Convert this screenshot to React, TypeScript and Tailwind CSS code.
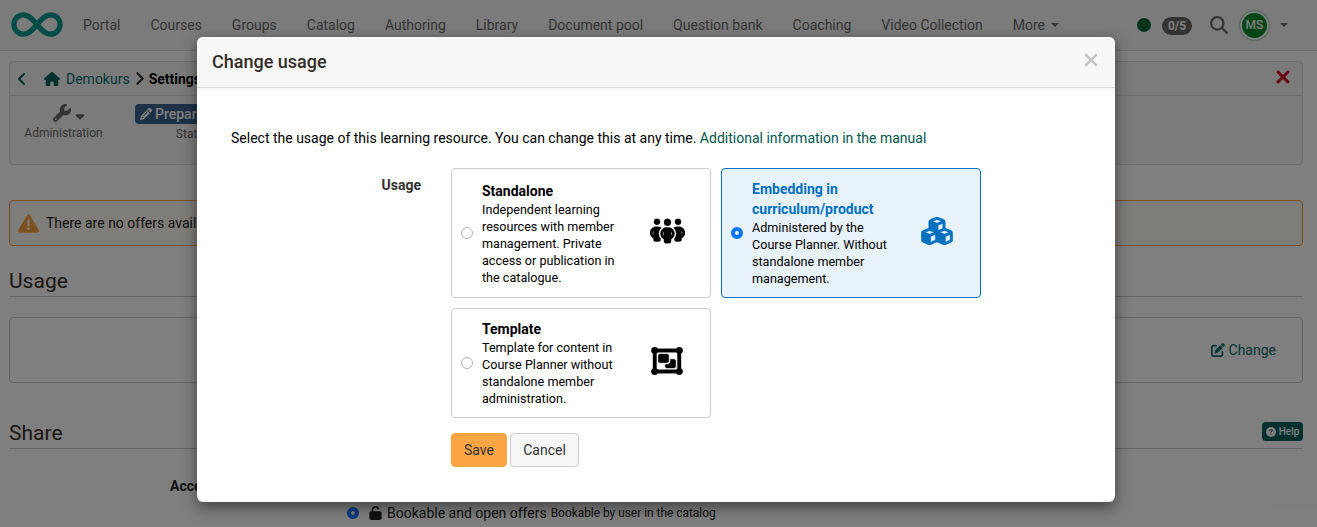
import type { ReactNode } from "react";
import {
  FaAngleLeft,
  FaAngleRight,
  FaCaretDown,
  FaCircleQuestion,
  FaCubes,
  FaHouse,
  FaMagnifyingGlass,
  FaObjectGroup,
  FaPencil,
  FaPenToSquare,
  FaPeopleGroup,
  FaTriangleExclamation,
  FaUnlock,
  FaWrench,
  FaXmark,
} from "react-icons/fa6";

const NAV = [
  "Portal",
  "Courses",
  "Groups",
  "Catalog",
  "Authoring",
  "Library",
  "Document pool",
  "Question bank",
  "Coaching",
  "Video Collection",
];

function Logo() {
  return (
    <svg className="h-[26px] w-[52px]" viewBox="0 0 52 26" fill="none" stroke="#009b91" strokeWidth="5.2">
      <path d="M26 12.500C21.5 7.500 18.500 2.800 12.500 2.800A9.600 9.700 0 0 0 12.500 22.200C18.500 22.200 21.500 17.500 26 12.500C30.500 7.500 33.500 2.800 39.500 2.800A9.600 9.700 0 0 1 39.500 22.200C33.500 22.200 30.500 17.500 26 12.500Z" />
    </svg>
  );
}

function Caret() {
  return <span className="border-x-4 border-t-4 border-x-transparent border-t-current" />;
}

function Radio({ checked }: { checked?: boolean }) {
  return checked ? (
    <span className="size-3 shrink-0 rounded-full border-4 border-[#0075ff] bg-white" />
  ) : (
    <span className="size-3 shrink-0 rounded-full border border-[#b2b2b2] bg-white" />
  );
}

function Header() {
  return (
    <header className="flex h-[51px] items-center border-b border-[#dddddd] bg-[#f7f7f7] pl-[11px] text-[#6b6b6b]">
      <div className="flex w-[72px]">
        <Logo />
      </div>
      <nav className="flex flex-1 gap-[30px]">
        {NAV.map((n) => (
          <span key={n}>{n}</span>
        ))}
        <span className="flex items-center gap-1.5">
          More <Caret />
        </span>
      </nav>
      <div className="flex items-center pr-[29px]">
        <span className="mr-[11px] size-3.5 rounded-full bg-[#006b3a]" />
        <span className="mr-[18px] mt-0.5 flex h-[18px] w-[30px] items-center justify-center rounded-full bg-[#666666] text-xs font-bold text-white">
          0/5
        </span>
        <FaMagnifyingGlass className="mr-3 size-[18px]" />
        <span className="mr-[11px] flex size-[29px] items-center justify-center rounded-full border-2 border-white bg-[#008a2a] text-xs font-medium text-white shadow-[0_0_2px_#008a2a]">
          MS
        </span>
        <Caret />
      </div>
    </header>
  );
}

function Toolbar() {
  return (
    <section className="mt-2.5 h-[104px] rounded border border-[#dddddd] bg-[#f7f7f7]">
      <div className="flex h-[34px] items-center border-b border-[#dddddd] pr-[9px] pl-1 text-[#006f69]">
        <FaAngleLeft className="mr-3.5 size-4 text-[#00605b]" />
        <FaHouse className="mr-1.5 size-4 text-[#00605b]" />
        <span>Demokurs</span>
        <FaAngleRight className="mx-px size-[17px] text-[#333333]" />
        <span className="font-bold text-black">Settings</span>
        <FaXmark className="mb-1 ml-auto size-5 stroke-[12px] text-[#cc0024]" />
      </div>
      <div className="flex">
        <div className="ml-3.5 flex w-[79px] flex-col items-center text-xs text-[#666666]">
          <div className="mt-2 flex h-[18px] items-center gap-0.5 pl-3">
            <FaWrench className="size-[18px]" />
            <FaCaretDown className="mt-1.5 size-3.5" />
          </div>
          <span className="mt-px leading-5">Administration</span>
        </div>
        <div className="ml-8 flex w-[116px] flex-col items-center text-xs text-[#666666]">
          <div className="mt-2 flex h-5 w-full items-center gap-[3px] rounded bg-[#3b638f] px-[5px] text-sm font-medium text-white">
            <FaPencil className="size-3" />
            Preparation
          </div>
          <span className="leading-5">Status</span>
        </div>
      </div>
    </section>
  );
}

function Background() {
  return (
    <div className="h-full bg-white">
      <Header />
      <main className="mx-[9px] mr-3.5">
        <Toolbar />
        <div className="mt-[35px] flex h-[46px] items-center gap-[7px] rounded border border-[#f9a341] bg-[#fffbf5] pl-2 text-[#222222]">
          <FaTriangleExclamation className="size-[21px] text-[#fba545]" />
          <span>There are no offers available.</span>
        </div>
        <h2 className="mt-[22px] h-[29px] border-b border-[#cccccc] text-[21px] leading-[26px] text-[#332d28]">Usage</h2>
        <div className="mt-5 flex h-[66px] items-center justify-end gap-1 rounded border border-[#cccccc] pr-[26px] text-[#006f69]">
          <FaPenToSquare className="size-3.5" />
          <span>Change</span>
        </div>
        <div className="mt-[37px] flex h-[29px] justify-between border-b border-[#cccccc]">
          <h2 className="text-[21px] leading-[26px] text-[#332d28]">Share</h2>
          <span className="mt-0.5 flex h-[19px] w-[41px] items-center justify-center gap-[3px] rounded-sm bg-[#00605b] text-[10px] font-medium text-white">
            <FaCircleQuestion className="size-2.5" />
            Help
          </span>
        </div>
        <div className="mt-[27px] ml-[161px] font-bold text-[#222222]">Access</div>
        <div className="mt-[7px] ml-[338px] flex items-center text-[#222222]">
          <Radio checked />
          <FaUnlock className="mr-[5px] ml-2.5 h-3.5 w-[13px]" />
          <span>Bookable and open offers</span>
          <span className="ml-1 text-[11.9px]">Bookable by user in the catalog</span>
        </div>
      </main>
    </div>
  );
}

function Option({
  title,
  text,
  icon,
  selected,
  short,
}: {
  title: string[];
  text: string[];
  icon: ReactNode;
  selected?: boolean;
  short?: boolean;
}) {
  return (
    <label
      className={`flex w-[260px] items-center rounded border pl-[9px] ${short ? "h-[110px]" : "h-[130px]"} ${
        selected ? "border-[#0070bf] bg-[#e8f2fb]" : "border-[#cccccc] bg-white"
      }`}
    >
      <Radio checked={selected} />
      <div className="ml-[9px] w-[153px]">
        <div className={`font-bold ${selected ? "text-[#0070bf]" : "text-black"}`}>
          {title.map((l) => (
            <div key={l}>{l}</div>
          ))}
        </div>
        <div className="text-[12.6px] leading-[17px] text-black">
          {text.map((l) => (
            <div key={l}>{l}</div>
          ))}
        </div>
      </div>
      <div className={`-mt-1 flex w-16 justify-center ${selected ? "text-[#0070bf]" : "text-black"}`}>{icon}</div>
    </label>
  );
}

function Modal() {
  return (
    <section className="h-[465px] w-[918px] overflow-hidden rounded-md bg-white shadow-[0_5px_15px_rgba(0,0,0,0.5)]">
      <div className="flex h-[51px] items-center justify-between border-b border-[#dddddd] bg-[#f7f7f7] pr-3.5 pl-[15px]">
        <h1 className="text-lg font-medium text-[#332d28]">Change usage</h1>
        <FaXmark className="mb-1 size-5 text-[#c4c4c4]" />
      </div>
      <div className="h-1.5 bg-linear-to-b from-[#f7f7f7] to-white" />
      <p className="mt-[34px] ml-[34px] text-black">
        Select the usage of this learning resource. You can change this at any time.{" "}
        <a className="text-[#00564f]">Additional information in the manual</a>
      </p>
      <div className="mt-5 flex">
        <div className="mt-[7px] mr-[30px] w-[224px] text-right font-bold text-[#333333]">Usage</div>
        <div>
          <div className="grid grid-cols-[260px_260px] gap-2.5">
            <Option
              title={["Standalone"]}
              text={[
                "Independent learning",
                "resources with member",
                "management. Private",
                "access or publication in",
                "the catalogue.",
              ]}
              icon={<FaPeopleGroup className="h-7 w-[35px] stroke-[7px]" />}
            />
            <Option
              selected
              title={["Embedding in", "curriculum/product"]}
              text={["Administered by the", "Course Planner. Without", "standalone member", "management."]}
              icon={<FaCubes className="h-7 w-8 stroke-[6px]" />}
            />
            <Option
              short
              title={["Template"]}
              text={["Template for content in", "Course Planner without", "standalone member", "administration."]}
              icon={<FaObjectGroup className="h-7 w-8 stroke-[7px]" />}
            />
          </div>
          <div className="mt-[15px] flex gap-[3px] text-[#333333]">
            <button className="h-[34px] w-14 rounded border border-[#f9a341] bg-[#fba545]">Save</button>
            <button className="h-[34px] w-[69px] rounded border border-[#cccccc] bg-[#f7f7f7]">Cancel</button>
          </div>
        </div>
      </div>
    </section>
  );
}

export default function App() {
  return (
    <div className="relative h-[527px] w-[1317px] overflow-hidden font-[Roboto,sans-serif] text-sm leading-5">
      <Background />
      <div className="absolute inset-0 flex items-start bg-black/50 pt-[37px] pl-[197px]">
        <Modal />
      </div>
    </div>
  );
}
